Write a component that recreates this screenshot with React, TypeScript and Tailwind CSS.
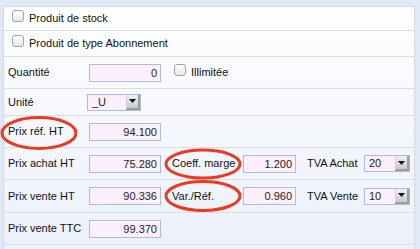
import React from 'react';

const font = "font-['Liberation_Sans',Arial,sans-serif]";

function Check() {
  return (
    <span className="inline-block w-[12px] h-[12px] rounded-[3px] border border-[#a3a3a3] bg-gradient-to-b from-white to-[#e6e6e6] shrink-0" />
  );
}

function Field({ value, w = 'w-[72px]' }: { value: string; w?: string }) {
  return (
    <div className={`${w} h-[18px] border border-[#aabcda] bg-[#fdf0fc] text-right pr-[3px] leading-[16px] text-[#222]`}>
      {value}
    </div>
  );
}

function Select({ value, w }: { value: string; w: string }) {
  return (
    <div className={`${w} h-[17px] border border-[#aabcda] bg-[#fdf0fc] flex items-stretch`}>
      <span className="flex-1 pl-[4px] leading-[15px] text-[#222]">{value}</span>
      <span className="w-[14px] flex items-center justify-center bg-gradient-to-b from-[#f2f2f2] to-[#c9c9c9] border-l border-[#d0d0d0] border-r-2 border-r-[#9d9d9d] border-b-2 border-b-[#9d9d9d]">
        <svg width="7" height="4" viewBox="0 0 7 4">
          <path d="M0 0h7L3.5 4z" fill="#111" />
        </svg>
      </span>
    </div>
  );
}

function Row({ h, children }: { h: string; children: React.ReactNode }) {
  return <div className={`${h} flex items-center border-b border-[#dadde3] pl-[4px]`}>{children}</div>;
}

export default function App() {
  return (
    <div className={`relative w-[420px] h-[249px] overflow-hidden bg-[#dfe8f7] pt-[6px] pl-[3px] pr-[5px] text-[11px] text-[#111] ${font}`}>
      <div className="h-[260px] border border-[#d6dae1] bg-gradient-to-b from-white via-[#f4f7fc] to-[#eaf0fa]">
        <Row h="h-[24px]">
          <span className="ml-[4px] mr-[5px]"><Check /></span>
          <span>Produit de stock</span>
        </Row>
        <Row h="h-[26px]">
          <span className="ml-[4px] mr-[5px]"><Check /></span>
          <span>Produit de type Abonnement</span>
        </Row>
        <Row h="h-[32px]">
          <span className="w-[81px]">Quantité</span>
          <Field value="0" />
          <span className="ml-[13px] mr-[5px]"><Check /></span>
          <span>Illimitée</span>
        </Row>
        <Row h="h-[27px]">
          <span className="w-[79px]">Unité</span>
          <Select value="_U" w="w-[54px]" />
        </Row>
        <Row h="h-[32px]">
          <span className="w-[81px]">Prix réf. HT</span>
          <Field value="94.100" />
        </Row>
        <Row h="h-[32px]">
          <span className="w-[81px]">Prix achat HT</span>
          <Field value="75.280" />
          <span className="w-[71px] ml-[11px]">Coeff. marge</span>
          <Field value="1.200" w="w-[53px]" />
          <span className="w-[57px] ml-[11px]">TVA Achat</span>
          <Select value="20" w="w-[46px]" />
        </Row>
        <Row h="h-[33px]">
          <span className="w-[81px]">Prix vente HT</span>
          <Field value="90.336" />
          <span className="w-[71px] ml-[11px]">Var./Réf.</span>
          <Field value="0.960" w="w-[53px]" />
          <span className="w-[57px] ml-[11px]">TVA Vente</span>
          <Select value="10" w="w-[46px]" />
        </Row>
        <Row h="h-[32px]">
          <span className="w-[81px]">Prix vente TTC</span>
          <Field value="99.370" />
        </Row>
      </div>
      <svg className="absolute left-0 top-0 pointer-events-none" width="420" height="249" viewBox="0 0 420 249">
        <g fill="none" stroke="#ea3a22" strokeWidth="3">
          <ellipse cx="39" cy="133" rx="37" ry="15.5" />
          <ellipse cx="203" cy="164" rx="37" ry="14" />
          <ellipse cx="203" cy="196" rx="37" ry="14.5" />
        </g>
      </svg>
    </div>
  );
}
